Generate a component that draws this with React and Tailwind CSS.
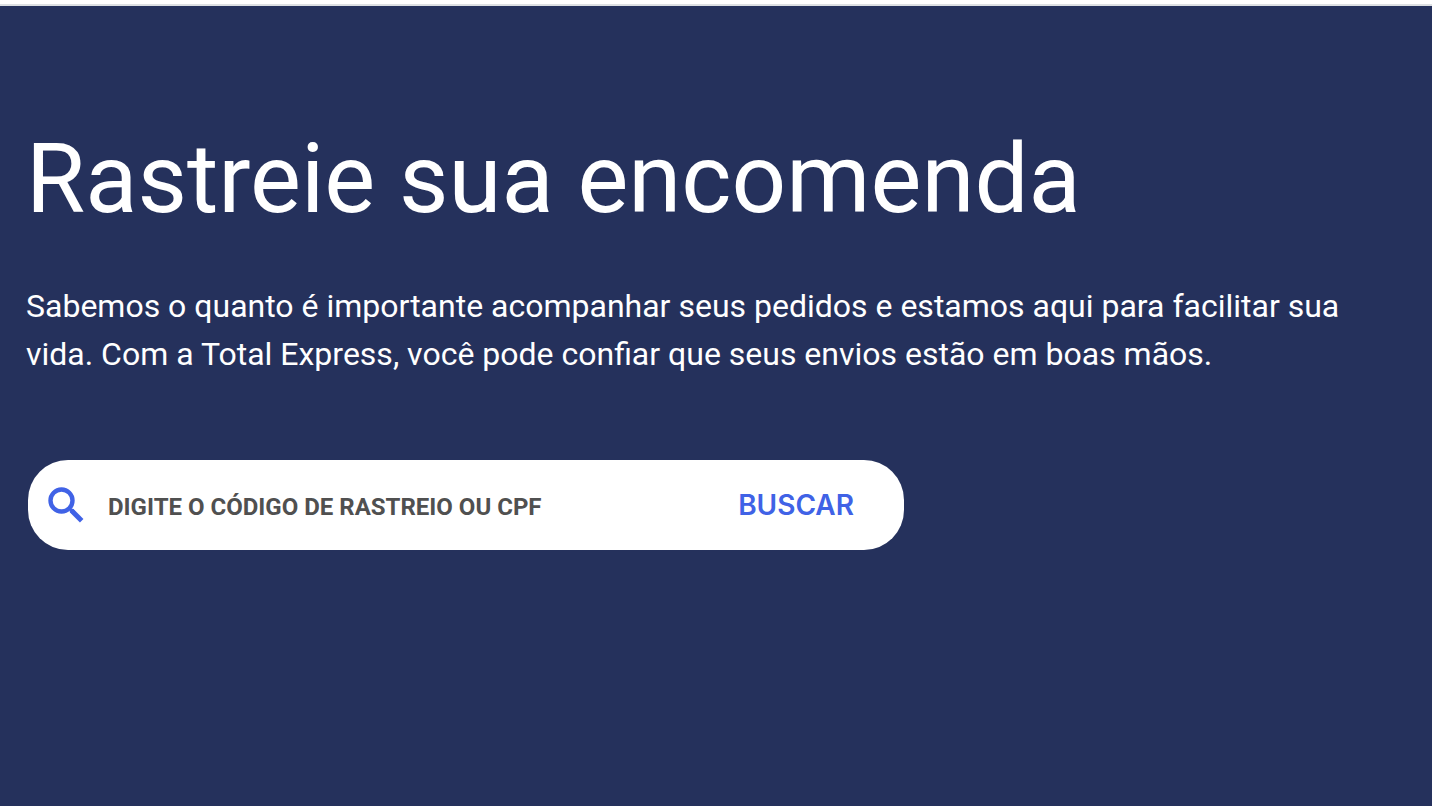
import { useState } from "react";

const App = () => {
  const [code, setCode] = useState("");

  const handleSubmit = (e) => {
    e.preventDefault();
  };

  return (
    <div className="min-h-screen flex flex-col bg-[#25315c] text-white font-[Roboto,sans-serif]">
      {/* Bottom edge of the site header */}
      <header className="h-[6px] bg-white border-b-2 border-[#dde0e3]" />

      <main className="flex-1 px-[26px] pt-28 pb-12">
        <h1 className="text-8xl leading-[122px]">Rastreie sua encomenda</h1>

        <p className="mt-[42px] text-[32px] leading-[48px]">
          Sabemos o quanto é importante acompanhar seus pedidos e estamos aqui para facilitar sua
          vida. Com a Total Express, você pode confiar que seus envios estão em boas mãos.
        </p>

        <form
          onSubmit={handleSubmit}
          className="mt-[82px] mx-[2px] w-full max-w-[876px] h-[90px] flex items-center rounded-[40px] bg-white pl-5 pr-[50px]"
        >
          <svg className="size-9 shrink-0" viewBox="0 0 36 36" fill="none" stroke="#4062e6" aria-hidden="true">
            <circle cx="13.5" cy="13.5" r="11" strokeWidth="4.4" />
            <path d="M23.5 23.5 L33.7 33.7" strokeWidth="5" />
            <path d="M23.8 23.8 L25 25" strokeWidth="4.4" strokeLinecap="round" />
          </svg>
          <input
            type="text"
            aria-label="Código de rastreio ou CPF"
            placeholder="DIGITE O CÓDIGO DE RASTREIO OU CPF"
            className="flex-1 min-w-0 ml-6 pt-1 text-2xl font-bold text-[#505050] placeholder:text-[#505050] outline-none"
            value={code}
            onChange={(e) => setCode(e.target.value)}
          />
          <button type="submit" className="font-[Inter,sans-serif] text-[28px] font-semibold text-[#4062e6] cursor-pointer">
            BUSCAR
          </button>
        </form>
      </main>
    </div>
  );
};
export default App;
